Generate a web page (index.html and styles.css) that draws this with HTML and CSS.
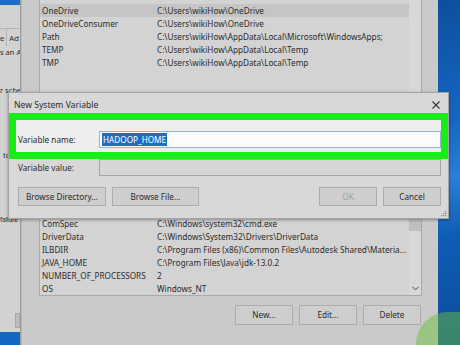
FILE: index.html
```html
<!DOCTYPE HTML>
<html>
	<head>
		<meta charset="utf-8">
		<title>New System Variable</title>
		<link rel="stylesheet" href="styles.css">
	</head>
	<body>
		<div class="screen">

			<!-- system properties window, mostly hidden on the left -->
			<div class="sysprops">
				<div class="sp-title"></div>
				<div class="sp-tabs"><span class="sp-tab">e</span><span class="sp-tab last">Ad</span></div>
				<div class="sp-line sp-admin">s an A</div>
				<div class="sp-line sp-sched">r sche</div>
				<div class="sp-line sp-to">to</div>
				<div class="sp-line sp-fail">failure</div>
				<div class="sp-thumb"></div>
				<div class="sp-task"></div>
			</div>

			<!-- environment variables window -->
			<div class="envwin">
				<div class="varlist userlist">
					<div class="rows">
						<div class="row selected"><span class="name">OneDrive</span><span class="value">C:\Users\wikiHow\OneDrive</span></div>
						<div class="row"><span class="name">OneDriveConsumer</span><span class="value">C:\Users\wikiHow\OneDrive</span></div>
						<div class="row"><span class="name">Path</span><span class="value">C:\Users\wikiHow\AppData\Local\Microsoft\WindowsApps;</span></div>
						<div class="row"><span class="name">TEMP</span><span class="value">C:\Users\wikiHow\AppData\Local\Temp</span></div>
						<div class="row"><span class="name">TMP</span><span class="value">C:\Users\wikiHow\AppData\Local\Temp</span></div>
					</div>
					<div class="scrollbar"></div>
				</div>

				<div class="envmid"></div>

				<div class="varlist syslist">
					<div class="rows">
						<div class="row"><span class="name">ComSpec</span><span class="value">C:\Windows\system32\cmd.exe</span></div>
						<div class="row"><span class="name">DriverData</span><span class="value">C:\Windows\System32\Drivers\DriverData</span></div>
						<div class="row"><span class="name">ILBDIR</span><span class="value">C:\Program Files (x86)\Common Files\Autodesk Shared\Materia...</span></div>
						<div class="row"><span class="name">JAVA_HOME</span><span class="value">C:\Program Files\Java\jdk-13.0.2</span></div>
						<div class="row"><span class="name">NUMBER_OF_PROCESSORS</span><span class="value">2</span></div>
						<div class="row"><span class="name">OS</span><span class="value">Windows_NT</span></div>
					</div>
					<div class="scrollbar">
						<div class="thumb"></div>
						<svg class="arrow" width="7" height="5" viewBox="0 0 7 5"><polyline points="0.5,0.8 3.5,3.8 6.5,0.8" fill="none" stroke="#444" stroke-width="1"/></svg>
					</div>
				</div>

				<div class="btnrow">
					<div class="btn">New...</div>
					<div class="btn">Edit...</div>
					<div class="btn">Delete</div>
				</div>
			</div>

			<div class="desktop"></div>

			<!-- the dialog on top -->
			<div class="dialog">
				<div class="dlg-title">
					<span>New System Variable</span>
					<svg class="close" width="8" height="8" viewBox="0 0 8 8"><path d="M0.5 0.5 L7.5 7.5 M7.5 0.5 L0.5 7.5" stroke="#333" stroke-width="1.1"/></svg>
				</div>

				<div class="highlight">
					<div class="field">
						<label>Variable name:</label>
						<div class="input name-input"><span class="sel">HADOOP_HOME</span></div>
					</div>
				</div>

				<div class="field value-field">
					<label>Variable value:</label>
					<div class="input value-input"></div>
				</div>

				<div class="dlg-buttons">
					<div class="btn browse-dir">Browse Directory...</div>
					<div class="btn browse-file">Browse File...</div>
					<div class="spacer"></div>
					<div class="btn ok disabled">OK</div>
					<div class="btn cancel">Cancel</div>
				</div>

				<svg class="grip" width="6" height="6" viewBox="0 0 6 6">
					<rect x="4" y="0" width="1.2" height="1.2" fill="#8a8a8a"/>
					<rect x="2" y="2" width="1.2" height="1.2" fill="#8a8a8a"/>
					<rect x="4" y="2" width="1.2" height="1.2" fill="#8a8a8a"/>
					<rect x="0" y="4" width="1.2" height="1.2" fill="#8a8a8a"/>
					<rect x="2" y="4" width="1.2" height="1.2" fill="#8a8a8a"/>
					<rect x="4" y="4" width="1.2" height="1.2" fill="#8a8a8a"/>
				</svg>
			</div>

			<div class="mark"></div>
		</div>
	</body>
</html>
```

FILE: styles.css
```css
*{
	box-sizing: border-box;
}
html, body{
	margin:0;
	padding:0;
}
.screen{
	width:460px;
	height:345px;
	position:relative;
	overflow:hidden;
	display:flex;
	font-family:"Noto Sans", "Open Sans", sans-serif;
	font-size:8.2px;
	color:#2b2b2b;
	background:#cbcbcb;
}

/* ---- system properties (left) ---- */
.sysprops{
	width:21px;
	flex:none;
	display:flex;
	flex-direction:column;
	overflow:hidden;
	white-space:nowrap;
	font-size:7.6px;
	background:#d2d2d2;
	border-right:1px solid #9c9c9c;
}
.sp-title{
	height:5px;
	background:#1b6fc4;
}
.sp-tabs{
	margin-top:23px;
	height:18px;
	line-height:18px;
	border-top:1px solid #b4b4b4;
	display:flex;
}
.sp-tab{
	padding:0 2px 0 0;
	border-right:1px solid #b4b4b4;
}
.sp-tab.last{
	padding-left:2px;
	border-right:none;
}
.sp-line{
	height:12px;
	line-height:12px;
}
.sp-sched{
	margin-top:26px;
}
.sp-to{
	margin-top:53px;
	margin-left:3px;
}
.sp-fail{
	margin-top:53px;
	font-size:6.6px;
	letter-spacing:-0.3px;
}
.sp-thumb{
	margin-top:87px;
	margin-left:15px;
	width:5px;
	height:15px;
	background:#bdbdbd;
	border:1px solid #a8a8a8;
}
.sp-task{
	margin-top:auto;
	height:13px;
	background:#1568c2;
}

/* ---- environment variables window ---- */
.envwin{
	width:417px;
	flex:none;
	display:flex;
	flex-direction:column;
	padding:0 16px 0 17px;
	border-left:1px solid #b9b9b9;
	background:#cacaca;
}
.varlist{
	display:flex;
	background:#d3d3d3;
	border:1px solid #a9a9a9;
}
.userlist{
	height:110px;
	margin-top:-1px;
	padding-top:4px;
}
.envmid{
	height:90px;
}
.syslist{
	padding-top:17px;
}
.rows{
	flex:1;
}
.row{
	display:flex;
	height:13px;
	line-height:13px;
	padding-left:2px;
	white-space:nowrap;
	overflow:hidden;
}
.row.selected{
	background:#c5c5c5;
}
.name{
	width:115px;
	flex:none;
}
.scrollbar{
	width:12px;
	flex:none;
	display:flex;
	flex-direction:column;
	align-items:center;
	background:#d8d8d8;
	margin-top:-17px;
}
.userlist .scrollbar{
	margin-top:-4px;
}
.thumb{
	width:12px;
	height:31px;
	background:#bfbfbf;
}
.arrow{
	margin-top:auto;
	margin-bottom:4px;
}
.btnrow{
	display:flex;
	justify-content:flex-end;
	gap:6px;
	margin-top:9px;
	padding-right:1px;
}
.btn{
	height:20px;
	line-height:18px;
	text-align:center;
	background:#cecece;
	border:1px solid #acacac;
	white-space:nowrap;
}
.btnrow .btn{
	width:58px;
}

/* ---- desktop on the right ---- */
.desktop{
	flex:1;
	background:linear-gradient(165deg, #0d4f9c 0%, #1665c4 35%, #2a7fdc 52%, #0f5cb6 68%, #0b4c9c 100%);
}

/* ---- the dialog ---- */
.dialog{
	position:absolute;
	left:8px;
	top:92px;
	width:441px;
	height:127px;
	background:#d8d8d8;
	border:1px solid #a4a4a4;
	box-shadow:0 1px 3px rgba(0,0,0,0.35);
	display:flex;
	flex-direction:column;
}
.dlg-title{
	height:20px;
	display:flex;
	align-items:center;
	justify-content:space-between;
	padding:3px 8px 0 5px;
	font-size:8.6px;
}
.close{
	display:block;
}
.highlight{
	border:7px solid #17ee17;
	background:#ededed;
	padding:11px 0 4px 2px;
}
.field{
	display:flex;
	align-items:center;
}
.field label{
	width:81px;
	flex:none;
}
.input{
	flex:1;
	height:17px;
	line-height:15px;
	padding-left:2px;
}
.name-input{
	background:#fbfbfb;
	border:1px solid #93b4d4;
}
.sel{
	background:#1f6ec4;
	color:#fff;
	padding:1px 1px;
}
.value-field{
	padding:0 7px 0 9px;
}
.value-input{
	background:#d6d6d6;
	border:1px solid #a6a6a6;
}
.dlg-buttons{
	display:flex;
	gap:6px;
	margin-top:11px;
	padding:0 7px 0 9px;
}
.dlg-buttons .btn{
	height:19px;
	line-height:17px;
}
.browse-dir{
	width:88px;
}
.browse-file{
	width:87px;
}
.spacer{
	flex:1;
}
.ok, .cancel{
	width:58px;
}
.disabled{
	color:#a3a3a3;
}
.grip{
	position:absolute;
	right:1px;
	bottom:1px;
}

/* watermark corner */
.mark{
	position:absolute;
	right:0;
	bottom:0;
	width:44px;
	height:33px;
	border-top-left-radius:32px 32px;
	background:rgba(105, 190, 60, 0.5);
}
```
